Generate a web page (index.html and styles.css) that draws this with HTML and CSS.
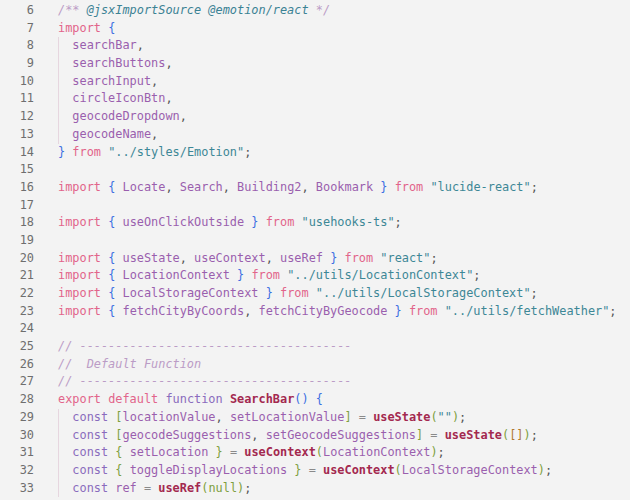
FILE: index.html
```html
<!DOCTYPE html>
<html>
<head>
<meta charset="utf-8">
<link rel="stylesheet" href="styles.css">
</head>
<body>
<div class="editor">
<div class="line"><span class="ln">6</span><span class="code"><span class="cm">/** </span><span class="tag">@jsxImportSource</span> <span class="tag">@emotion/react</span><span class="cm"> */</span></span></div>
<div class="line"><span class="ln">7</span><span class="code"><span class="kw">import</span> <span class="b1">{</span></span></div>
<div class="line"><span class="ln">8</span><span class="code guide">  <span class="id">searchBar</span><span class="p">,</span></span></div>
<div class="line"><span class="ln">9</span><span class="code guide">  <span class="id">searchButtons</span><span class="p">,</span></span></div>
<div class="line"><span class="ln">10</span><span class="code guide">  <span class="id">searchInput</span><span class="p">,</span></span></div>
<div class="line"><span class="ln">11</span><span class="code guide">  <span class="id">circleIconBtn</span><span class="p">,</span></span></div>
<div class="line"><span class="ln">12</span><span class="code guide">  <span class="id">geocodeDropdown</span><span class="p">,</span></span></div>
<div class="line"><span class="ln">13</span><span class="code guide">  <span class="id">geocodeName</span><span class="p">,</span></span></div>
<div class="line"><span class="ln">14</span><span class="code"><span class="b1">}</span> <span class="kw">from</span> <span class="str">"../styles/Emotion"</span><span class="p">;</span></span></div>
<div class="line"><span class="ln">15</span><span class="code"></span></div>
<div class="line"><span class="ln">16</span><span class="code"><span class="kw">import</span> <span class="b1">{</span> <span class="id">Locate</span><span class="p">,</span> <span class="id">Search</span><span class="p">,</span> <span class="id">Building2</span><span class="p">,</span> <span class="id">Bookmark</span> <span class="b1">}</span> <span class="kw">from</span> <span class="str">"lucide-react"</span><span class="p">;</span></span></div>
<div class="line"><span class="ln">17</span><span class="code"></span></div>
<div class="line"><span class="ln">18</span><span class="code"><span class="kw">import</span> <span class="b1">{</span> <span class="id">useOnClickOutside</span> <span class="b1">}</span> <span class="kw">from</span> <span class="str">"usehooks-ts"</span><span class="p">;</span></span></div>
<div class="line"><span class="ln">19</span><span class="code"></span></div>
<div class="line"><span class="ln">20</span><span class="code"><span class="kw">import</span> <span class="b1">{</span> <span class="id">useState</span><span class="p">,</span> <span class="id">useContext</span><span class="p">,</span> <span class="id">useRef</span> <span class="b1">}</span> <span class="kw">from</span> <span class="str">"react"</span><span class="p">;</span></span></div>
<div class="line"><span class="ln">21</span><span class="code"><span class="kw">import</span> <span class="b1">{</span> <span class="id">LocationContext</span> <span class="b1">}</span> <span class="kw">from</span> <span class="str">"../utils/LocationContext"</span><span class="p">;</span></span></div>
<div class="line"><span class="ln">22</span><span class="code"><span class="kw">import</span> <span class="b1">{</span> <span class="id">LocalStorageContext</span> <span class="b1">}</span> <span class="kw">from</span> <span class="str">"../utils/LocalStorageContext"</span><span class="p">;</span></span></div>
<div class="line"><span class="ln">23</span><span class="code"><span class="kw">import</span> <span class="b1">{</span> <span class="id">fetchCityByCoords</span><span class="p">,</span> <span class="id">fetchCityByGeocode</span> <span class="b1">}</span> <span class="kw">from</span> <span class="str">"../utils/fetchWeather"</span><span class="p">;</span></span></div>
<div class="line"><span class="ln">24</span><span class="code"></span></div>
<div class="line"><span class="ln">25</span><span class="code"><span class="cm">// --------------------------------------</span></span></div>
<div class="line"><span class="ln">26</span><span class="code"><span class="cm">//  Default Function</span></span></div>
<div class="line"><span class="ln">27</span><span class="code"><span class="cm">// --------------------------------------</span></span></div>
<div class="line"><span class="ln">28</span><span class="code"><span class="kw">export</span> <span class="kw">default</span> <span class="st">function</span> <span class="fn">SearchBar</span><span class="b1">()</span> <span class="b1">{</span></span></div>
<div class="line"><span class="ln">29</span><span class="code guide">  <span class="st">const</span> <span class="b2">[</span><span class="id">locationValue</span><span class="p">,</span> <span class="id">setLocationValue</span><span class="b2">]</span> <span class="op">=</span> <span class="fn">useState</span><span class="b2">(</span><span class="str">""</span><span class="b2">)</span><span class="p">;</span></span></div>
<div class="line"><span class="ln">30</span><span class="code guide">  <span class="st">const</span> <span class="b2">[</span><span class="id">geocodeSuggestions</span><span class="p">,</span> <span class="id">setGeocodeSuggestions</span><span class="b2">]</span> <span class="op">=</span> <span class="fn">useState</span><span class="b2">(</span><span class="b3">[]</span><span class="b2">)</span><span class="p">;</span></span></div>
<div class="line"><span class="ln">31</span><span class="code guide">  <span class="st">const</span> <span class="b2">{</span> <span class="id">setLocation</span> <span class="b2">}</span> <span class="op">=</span> <span class="fn">useContext</span><span class="b2">(</span><span class="id">LocationContext</span><span class="b2">)</span><span class="p">;</span></span></div>
<div class="line"><span class="ln">32</span><span class="code guide">  <span class="st">const</span> <span class="b2">{</span> <span class="id">toggleDisplayLocations</span> <span class="b2">}</span> <span class="op">=</span> <span class="fn">useContext</span><span class="b2">(</span><span class="id">LocalStorageContext</span><span class="b2">)</span><span class="p">;</span></span></div>
<div class="line"><span class="ln">33</span><span class="code guide">  <span class="st">const</span> <span class="id">ref</span> <span class="op">=</span> <span class="fn">useRef</span><span class="b2">(</span><span class="nul">null</span><span class="b2">)</span><span class="p">;</span></span></div>
</div>
</body>
</html>
```
FILE: styles.css
```css
html, body {
  margin: 0;
  padding: 0;
  background: #f3f3f3;
}
.editor {
  padding-top: 2px;
  font-family: "DejaVu Sans Mono", "Liberation Mono", monospace;
  font-size: 11.9px;
  color: #555;
}
.line {
  display: flex;
  height: 17.7px;
  line-height: 17.7px;
}
.ln {
  width: 34px;
  flex: none;
  text-align: right;
  color: #6e6e6e;
}
.code {
  margin-left: 24px;
  white-space: pre;
  flex: 1;
}
.guide {
  background: linear-gradient(#e6d6df, #e6d6df) no-repeat 0 0 / 1px 100%;
}
.cm { color: #bb9cc6; font-style: italic; }
.tag { color: #3b8294; font-style: italic; }
.kw { color: #e2648a; }
.id { color: #9a5fae; }
.st { color: #8a6bbd; }
.fn { color: #a3294f; font-weight: bold; }
.str { color: #3d8796; }
.p { color: #555; }
.op { color: #8a8a8a; }
.b1 { color: #3c6fe2; }
.b2 { color: #7e9f3e; }
.b3 { color: #b0782e; }
.nul { color: #7e9f3e; }
```
